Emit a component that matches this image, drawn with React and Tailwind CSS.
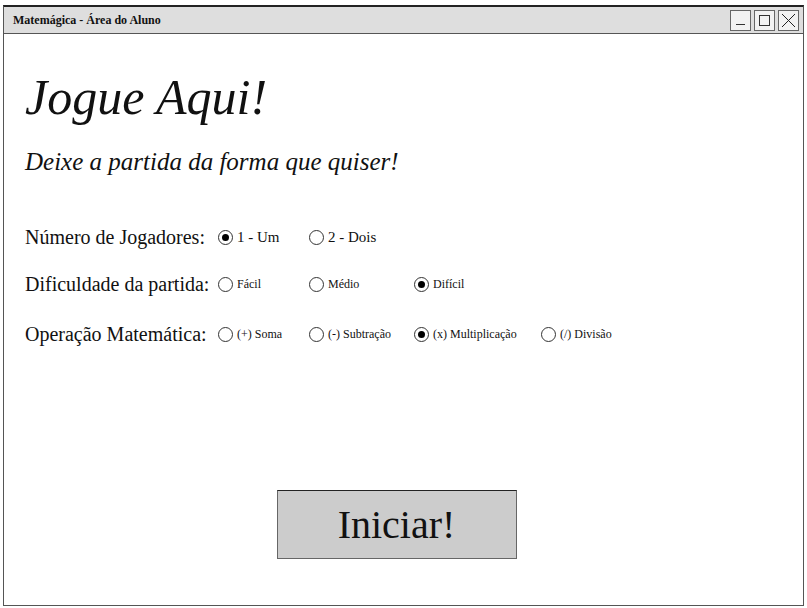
import React from 'react';

const serif = { fontFamily: '"Liberation Serif", "Times New Roman", serif' };

function Radio({ checked, label, size = 'text-[12px]' }) {
  return (
    <div className="flex items-center gap-[4px]">
      <span className="w-[15px] h-[15px] rounded-full border border-[#333] bg-white flex items-center justify-center shrink-0">
        {checked && <span className="w-[7px] h-[7px] rounded-full bg-black" />}
      </span>
      <span className={`${size} text-[#111] leading-none`}>{label}</span>
    </div>
  );
}

function OptionRow({ title, options, size, className = '' }) {
  return (
    <div className={`grid grid-cols-[193px_91px_105px_127px_auto] items-center ${className}`}>
      <div className="text-[20px] text-[#111] leading-none whitespace-nowrap">{title}</div>
      {options.map((o) => (
        <Radio key={o.label} checked={o.checked} label={o.label} size={size} />
      ))}
    </div>
  );
}

function WinButton({ children }) {
  return (
    <div className="w-[21px] h-[21px] border border-[#666] bg-[#f2f2f2] flex items-center justify-center">
      {children}
    </div>
  );
}

export default function App() {
  return (
    <div className="w-[807px] h-[608px] bg-white pt-[5px] pl-[3px]" style={serif}>
      <div className="w-[801px] h-[601px] border border-[#555] border-t-2 border-t-[#222] flex flex-col">
        {/* title bar */}
        <div className="h-[27px] bg-[#dedede] border-b border-[#555] flex items-center justify-between pl-[9px] pr-[4px]">
          <span className="text-[12px] font-bold text-[#111]">Matemágica - Área do Aluno</span>
          <div className="flex gap-[3px]">
            <WinButton>
              <span className="w-[9px] h-[1px] bg-[#333] mt-[9px]" />
            </WinButton>
            <WinButton>
              <span className="w-[11px] h-[11px] border border-[#333]" />
            </WinButton>
            <WinButton>
              <svg width="15" height="15" viewBox="0 0 15 15">
                <path d="M1 1L14 14M14 1L1 14" stroke="#222" strokeWidth="1" />
              </svg>
            </WinButton>
          </div>
        </div>

        {/* content */}
        <div className="flex-1 flex flex-col pl-[21px]">
          <h1 className="italic text-[50px] leading-none text-[#111] mt-[38px]">Jogue Aqui!</h1>
          <p className="italic text-[25px] leading-none text-[#111] mt-[27px]">
            Deixe a partida da forma que quiser!
          </p>

          <OptionRow
            className="mt-[53px]"
            title="Número de Jogadores:"
            size="text-[15px]"
            options={[
              { label: '1 - Um', checked: true },
              { label: '2 - Dois' },
            ]}
          />
          <OptionRow
            className="mt-[27px]"
            title="Dificuldade da partida:"
            options={[
              { label: 'Fácil' },
              { label: 'Médio' },
              { label: 'Difícil', checked: true },
            ]}
          />
          <OptionRow
            className="mt-[30px]"
            title="Operação Matemática:"
            options={[
              { label: '(+) Soma' },
              { label: '(-) Subtração' },
              { label: '(x) Multiplicação', checked: true },
              { label: '(/) Divisão' },
            ]}
          />

          <div className="flex justify-center mt-[146px] pr-[35px]">
            <button className="w-[240px] h-[69px] bg-[#cccccc] border border-[#666] border-t-[#222] text-[40px] text-[#111] leading-none">
              Iniciar!
            </button>
          </div>
        </div>
      </div>
    </div>
  );
}
